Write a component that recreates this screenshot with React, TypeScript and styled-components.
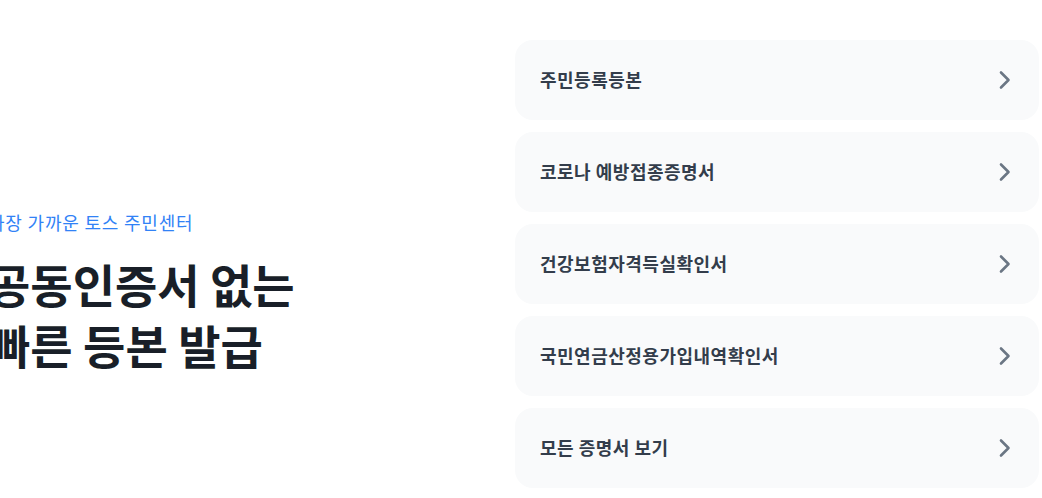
import React from 'react';
import styled, { createGlobalStyle } from 'styled-components';

const GlobalStyle = createGlobalStyle`
	html, body {
		margin: 0;
		padding: 0;
		background: #ffffff;
		overflow: hidden;
	}
	body {
		font-family: "Noto Sans CJK KR", "Noto Sans", sans-serif;
	}
`;

const items = [
	'주민등록등본',
	'코로나 예방접종증명서',
	'건강보험자격득실확인서',
	'국민연금산정용가입내역확인서',
	'모든 증명서 보기',
];

const ChevronIcon = () => (
	<svg width="24" height="24" viewBox="0 0 24 24" fill="none">
		<path d="M10 4.5L17.5 12L10 19.5" stroke="#6b7684" strokeWidth="2.6" strokeLinecap="round" strokeLinejoin="round" />
	</svg>
);

const App: React.FC = () => {
	return <>
		<GlobalStyle />
		<Page>
			<Intro>
				<Eyebrow>가장 가까운 토스 주민센터</Eyebrow>
				<Headline>공동인증서 없는<br />빠른 등본 발급</Headline>
			</Intro>
			<CardList>
				{items.map((label) => (
					<Card key={label}>
						<Label>{label}</Label>
						<ChevronIcon />
					</Card>
				))}
			</CardList>
		</Page>
	</>;
};

const Page = styled.main`
	display: flex;
	align-items: flex-start;
	width: 1042px;
	height: 498px;
	padding-top: 40px;
	box-sizing: border-box;
`;

const Intro = styled.section`
	flex: 0 0 527px;
	margin-left: -12px;
	padding-top: 169px;
`;

const Eyebrow = styled.p`
	margin: 0;
	font-size: 18px;
	line-height: 26px;
	font-weight: 400;
	color: #3182f6;
	letter-spacing: 0.8px;
`;

const Headline = styled.h1`
	margin: 18px 0 0;
	font-size: 46px;
	line-height: 61px;
	font-weight: 700;
	color: #191f28;
	letter-spacing: 0;
`;

const CardList = styled.ul`
	list-style: none;
	margin: 0;
	padding: 0;
	width: 524px;
	display: flex;
	flex-direction: column;
	gap: 12px;
`;

const Card = styled.li`
	height: 80px;
	box-sizing: border-box;
	padding: 0 24px 0 25px;
	display: flex;
	align-items: center;
	justify-content: space-between;
	background: #f9fafb;
	border-radius: 18px;
`;

const Label = styled.span`
	font-size: 18px;
	line-height: 26px;
	font-weight: 700;
	color: #333d4b;
	letter-spacing: 0.5px;
	margin-top: -3px;
`;

export default App;
